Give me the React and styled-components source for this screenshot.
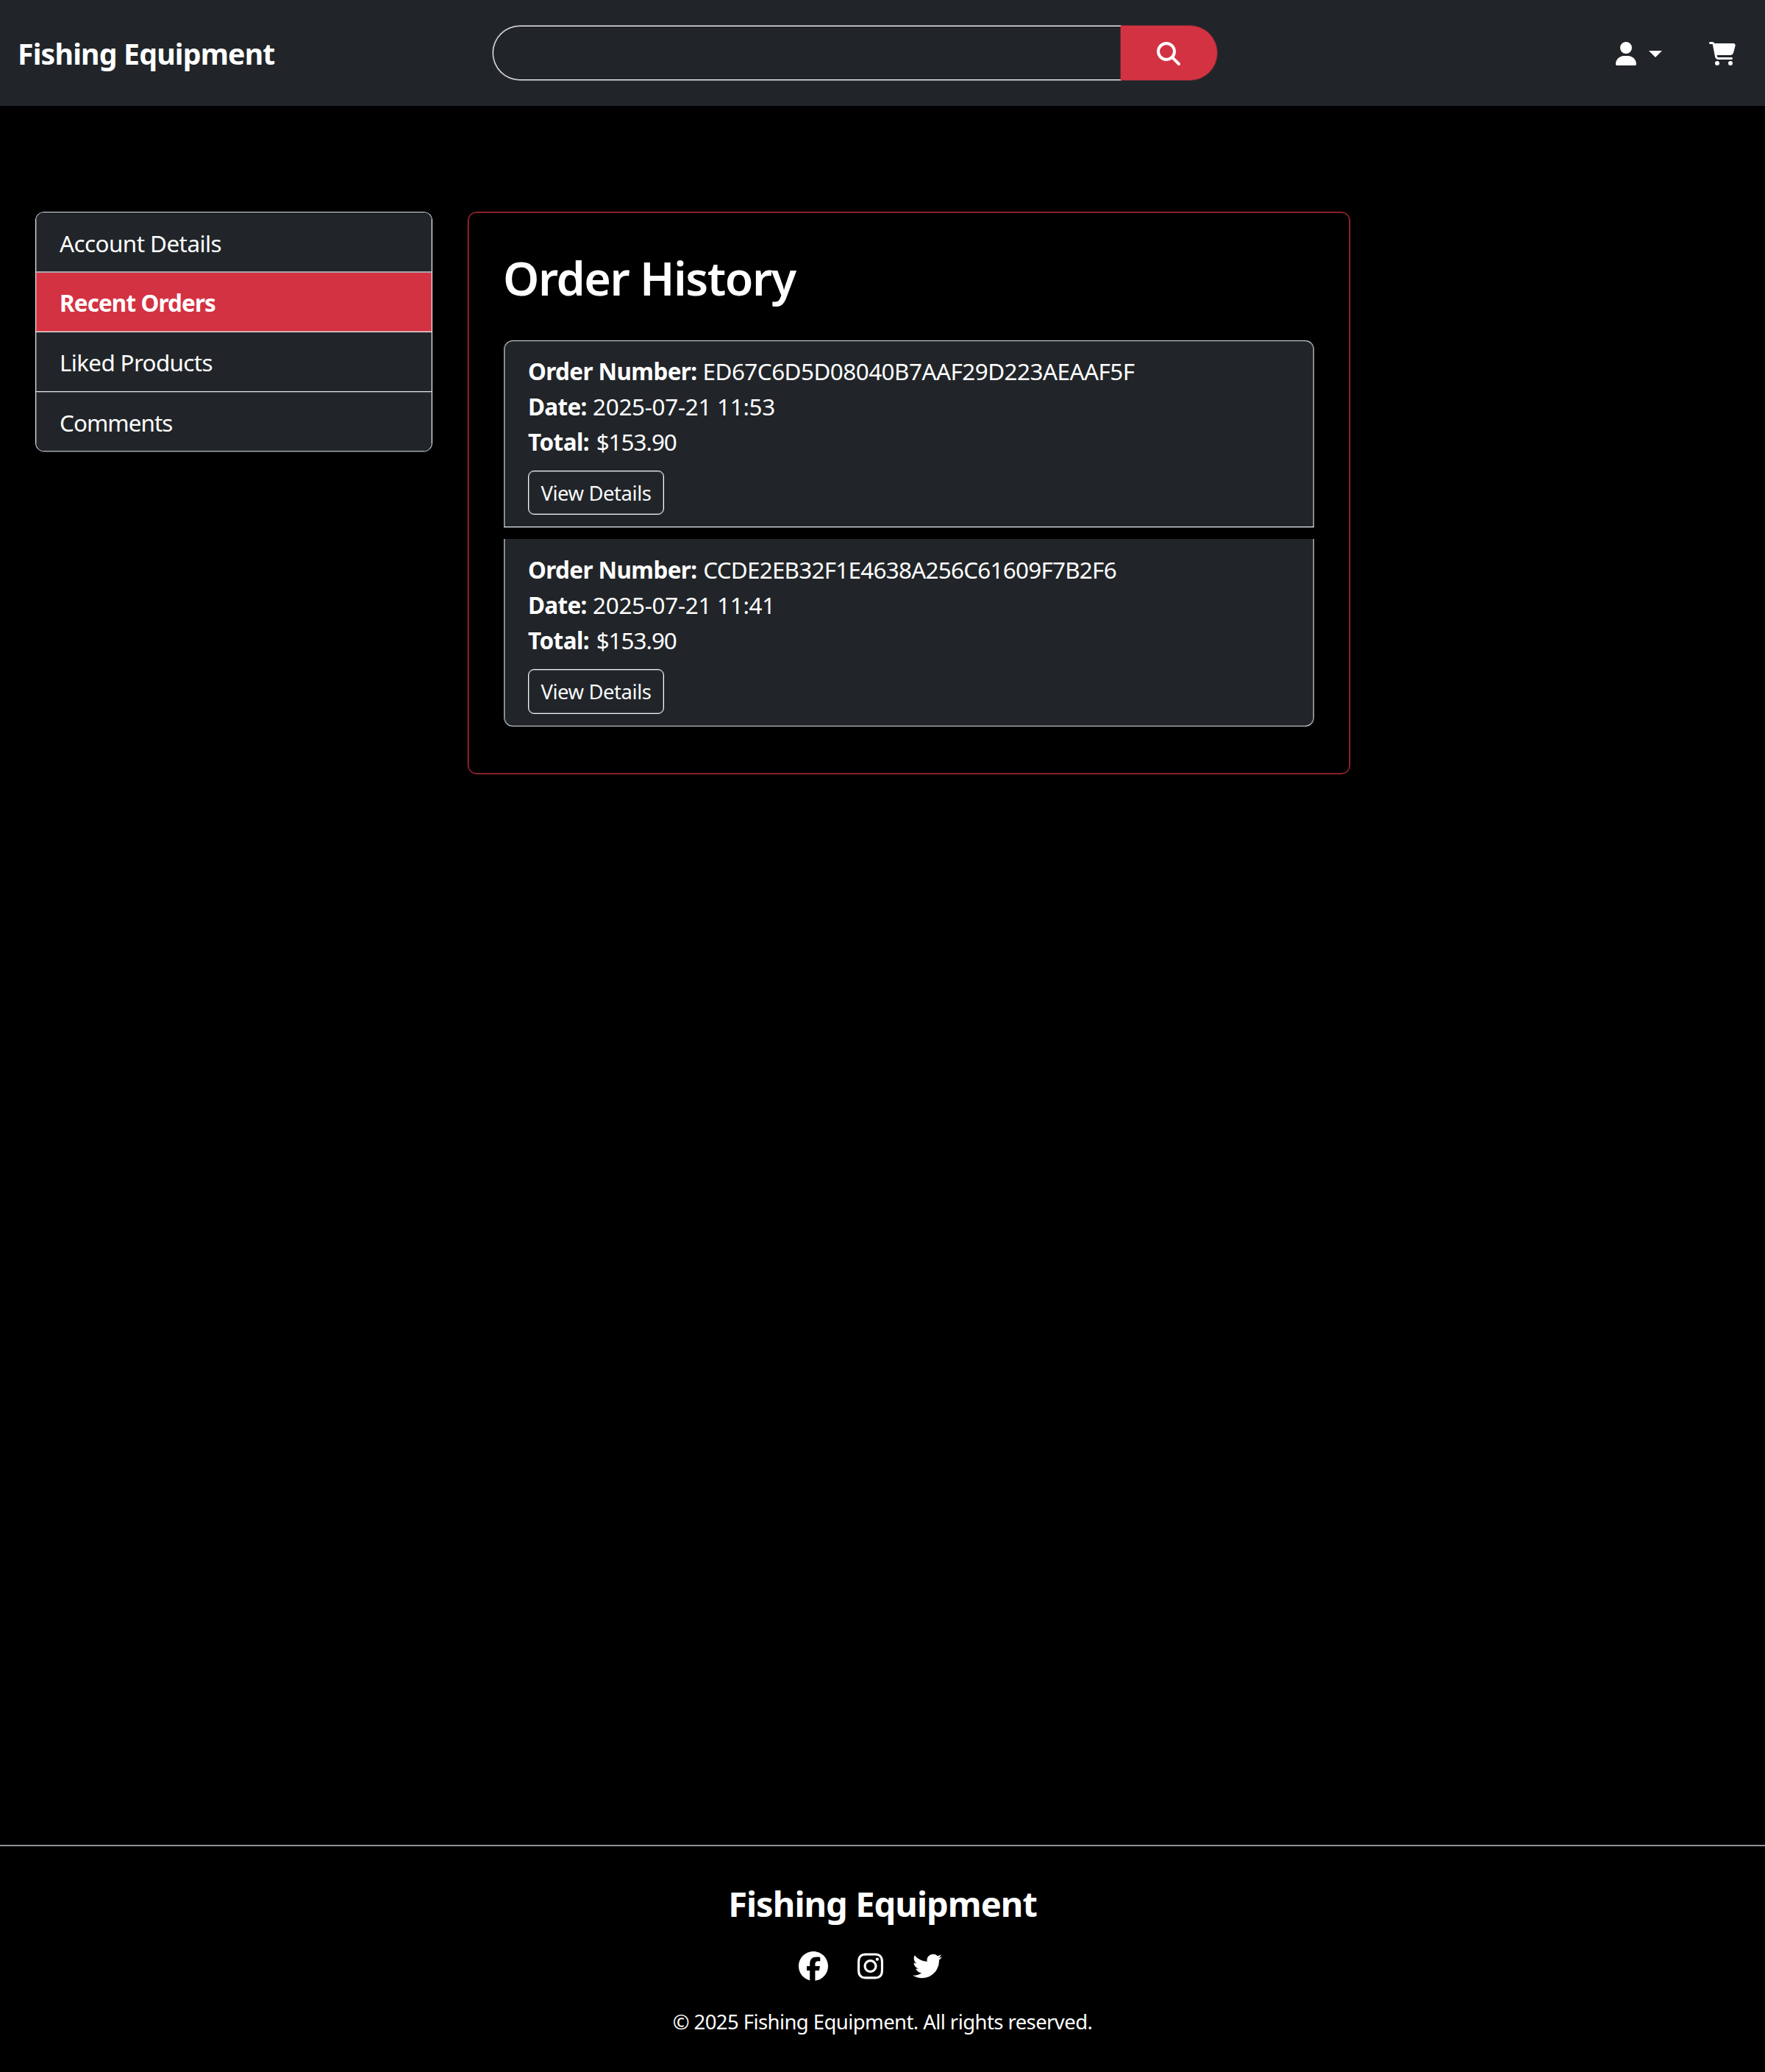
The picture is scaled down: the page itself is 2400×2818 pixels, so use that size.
import React from "react";
import styled, { createGlobalStyle } from "styled-components";
import {
  FaMagnifyingGlass,
  FaUser,
  FaCartShopping,
  FaFacebook,
  FaInstagram,
  FaTwitter,
} from "react-icons/fa6";

const dark = "#212529";
const red = "#d33242";
const line = "#dee2e6";

const GlobalStyle = createGlobalStyle`
  *, *::before, *::after { box-sizing: border-box; }
  body {
    margin: 0;
    background: #000;
    color: #fff;
    font-family: "Noto Sans", "Open Sans", sans-serif;
    font-size: 31.4px;
    line-height: 48px;
  }
`;

const Page = styled.div`
  display: flex;
  flex-direction: column;
  min-height: 2818px;
`;

const Icon = styled.span`
  display: flex;
  width: ${(p) => p.$w}px;
  height: ${(p) => p.$h}px;

  svg {
    display: block;
    width: 100%;
    height: 100%;
  }
`;

const Header = styled.header`
  display: grid;
  grid-template-columns: 646px 985px 1fr;
  align-items: center;
  height: 144px;
  padding: 0 40px 0 24px;
  background: ${dark};
`;

const Brand = styled.a`
  padding-top: 2px;
  font-size: 39.2px;
  font-weight: 700;
  line-height: 60px;
  letter-spacing: -0.81px;
`;

const SearchForm = styled.form`
  display: flex;
  height: 74px;
`;

const SearchInput = styled.input`
  width: 854px;
  padding: 0 32px;
  color: #fff;
  font: inherit;
  background: ${dark};
  border: 1px solid #fff;
  border-right: 0;
  border-radius: 37px 0 0 37px;
  box-shadow: 0 0 0 1px rgba(255, 255, 255, 0.35);
  outline: none;
`;

const SearchButton = styled.button`
  display: flex;
  align-items: center;
  justify-content: center;
  width: 131px;
  padding: 2px 2px 0 0;
  color: #fff;
  background: ${red};
  border: 0;
  border-radius: 0 37px 37px 0;
  box-shadow: 0 0 0 1px rgba(211, 50, 66, 0.35);
`;

const Actions = styled.nav`
  display: flex;
  align-items: center;
  justify-content: flex-end;
  gap: 64px;
  padding-top: 2px;
`;

const ActionLink = styled.a`
  display: flex;
  align-items: center;
  gap: 17px;
`;

const Caret = styled.span`
  border: 9.5px solid transparent;
  border-top-color: #fff;
  border-bottom: 0;
`;

const Main = styled.main`
  display: flex;
  flex: 1;
  align-items: flex-start;
  gap: 48px;
  padding: 144px 48px 0;
`;

const Menu = styled.ul`
  width: 540px;
  margin: 0;
  padding: 0;
  overflow: hidden;
  list-style: none;
  border: 1px solid ${line};
  border-bottom-color: #a9acb0;
  border-radius: 12px;
  box-shadow: 0 1px 0 rgba(222, 226, 230, 0.35);
`;

const MenuItem = styled.li`
  height: ${(p) => p.$height}px;
  padding: ${(p) => (p.$top ? 16.5 : 17.5)}px 32px 0;
  font-weight: ${(p) => (p.$active ? 700 : 400)};
  letter-spacing: ${(p) => p.$track}px;
  background: ${(p) => (p.$active ? red : dark)};
  border-top: ${(p) => (p.$top ? `1px solid ${p.$top}` : 0)};
  border-bottom: ${(p) => (p.$bottom ? `1px solid ${p.$bottom}` : 0)};
  box-shadow: inset 1px 0 rgba(222, 226, 230, 0.3), inset -1px 0 rgba(222, 226, 230, 0.3);
`;

const Panel = styled.section`
  width: 1200px;
  height: 765px;
  padding: 49.5px 48px 0;
  border: 1px solid ${red};
  border-radius: 12px;
  box-shadow: inset 0 0 0 1px rgba(211, 50, 66, 0.3);
`;

const Heading = styled.h1`
  margin: 0 0 47.5px -1px;
  font-size: 62.7px;
  font-weight: 600;
  line-height: 77px;
  letter-spacing: -1.45px;
`;

const OrderList = styled.div`
  display: flex;
  flex-direction: column;
  gap: 16px;
`;

const Order = styled.article`
  height: ${(p) => (p.$first ? 254 : 255)}px;
  padding: ${(p) => (p.$first ? 16.5 : 17.5)}px 32px 0;
  background: ${dark};
  border: 1px solid #a4a7aa;
  border-top: ${(p) => (p.$first ? `1px solid ${line}` : 0)};
  border-bottom-color: ${line};
  border-radius: ${(p) => (p.$first ? "12px 12px 0 0" : "0 0 12px 12px")};
  box-shadow:
    inset 1px 0 rgba(222, 226, 230, 0.4),
    inset -1px 0 rgba(222, 226, 230, 0.4),
    0 ${(p) => (p.$first ? 1 : 0)}px 0 rgba(222, 226, 230, 0.35);
`;

const Field = styled.div`
  display: flex;
  align-items: baseline;
  gap: ${(p) => p.$gap}px;
`;

const Label = styled.strong`
  font-weight: 700;
  letter-spacing: ${(p) => p.$track}px;
`;

const Value = styled.span`
  letter-spacing: ${(p) => p.$track}px;
`;

const DetailsButton = styled.button`
  display: block;
  width: 185px;
  height: ${(p) => (p.$tall ? 61 : 60)}px;
  margin-top: 15px;
  padding: 2px 0 0;
  color: #f8f9fa;
  font: inherit;
  font-size: 27.4px;
  line-height: 42px;
  letter-spacing: -0.4px;
  background: transparent;
  border: 1px solid #f8f9fa;
  border-radius: 8px;
  box-shadow: inset 0 0 0 1px rgba(248, 249, 250, 0.3);
`;

const Footer = styled.footer`
  display: flex;
  flex-direction: column;
  align-items: center;
  height: 309px;
  padding-top: 49px;
  border-top: 2px solid #8e9499;
`;

const FooterTitle = styled.h2`
  margin: 0 0 36px;
  font-size: 47px;
  font-weight: 700;
  line-height: 58px;
  letter-spacing: -0.94px;
`;

const Social = styled.div`
  display: flex;
  gap: 40px;
  margin-bottom: 35px;
  padding-right: 34px;
`;

const Copyright = styled.p`
  margin: 0;
  font-size: 27.44px;
  line-height: 42px;
  letter-spacing: -0.55px;
`;

const menu = [
  { text: "Account Details", track: -0.55, height: 81, bottom: "#a5a8ab" },
  { text: "Recent Orders", track: -0.85, height: 81, active: true, top: "#a9a0a6", bottom: "#e28089" },
  { text: "Liked Products", track: -0.65, height: 82, top: line, bottom: line },
  { text: "Comments", track: -0.95, height: 80, top: "#5c6064" },
];

const orders = [
  {
    number: "ED67C6D5D08040B7AAF29D223AEAAF5F",
    track: -0.51,
    gap: 8,
    date: "2025-07-21 11:53",
    total: "$153.90",
  },
  {
    number: "CCDE2EB32F1E4638A256C61609F7B2F6",
    track: -0.73,
    gap: 8.6,
    date: "2025-07-21 11:41",
    total: "$153.90",
  },
];

const social = [
  { Glyph: FaFacebook, width: 40 },
  { Glyph: FaInstagram, width: 35 },
  { Glyph: FaTwitter, width: 40 },
];

export default function App() {
  return (
    <Page>
      <GlobalStyle />
      <Header>
        <Brand>Fishing Equipment</Brand>
        <SearchForm>
          <SearchInput aria-label="Search" />
          <SearchButton type="button" aria-label="Search">
            <Icon $w={32} $h={32}>
              <FaMagnifyingGlass />
            </Icon>
          </SearchButton>
        </SearchForm>
        <Actions>
          <ActionLink aria-label="Account">
            <Icon $w={28} $h={32}>
              <FaUser />
            </Icon>
            <Caret />
          </ActionLink>
          <ActionLink aria-label="Cart">
            <Icon $w={36} $h={32}>
              <FaCartShopping />
            </Icon>
          </ActionLink>
        </Actions>
      </Header>
      <Main>
        <Menu>
          {menu.map((m) => (
            <MenuItem
              key={m.text}
              $active={m.active}
              $track={m.track}
              $height={m.height}
              $top={m.top}
              $bottom={m.bottom}
            >
              {m.text}
            </MenuItem>
          ))}
        </Menu>
        <Panel>
          <Heading>Order History</Heading>
          <OrderList>
            {orders.map((o, i) => (
              <Order key={o.number} $first={i === 0}>
                <Field $gap={o.gap}>
                  <Label $track={-0.57}>Order Number:</Label>
                  <Value $track={o.track}>{o.number}</Value>
                </Field>
                <Field $gap={8.4}>
                  <Label $track={-0.67}>Date:</Label>
                  <Value $track={-0.27}>{o.date}</Value>
                </Field>
                <Field $gap={9.5}>
                  <Label $track={-0.5}>Total:</Label>
                  <Value $track={-1}>{o.total}</Value>
                </Field>
                <DetailsButton $tall={i === 1}>View Details</DetailsButton>
              </Order>
            ))}
          </OrderList>
        </Panel>
      </Main>
      <Footer>
        <FooterTitle>Fishing Equipment</FooterTitle>
        <Social>
          {social.map(({ Glyph, width }) => (
            <Icon key={width + Glyph.name} $w={width} $h={40}>
              <Glyph />
            </Icon>
          ))}
        </Social>
        <Copyright>© 2025 Fishing Equipment. All rights reserved.</Copyright>
      </Footer>
    </Page>
  );
}
